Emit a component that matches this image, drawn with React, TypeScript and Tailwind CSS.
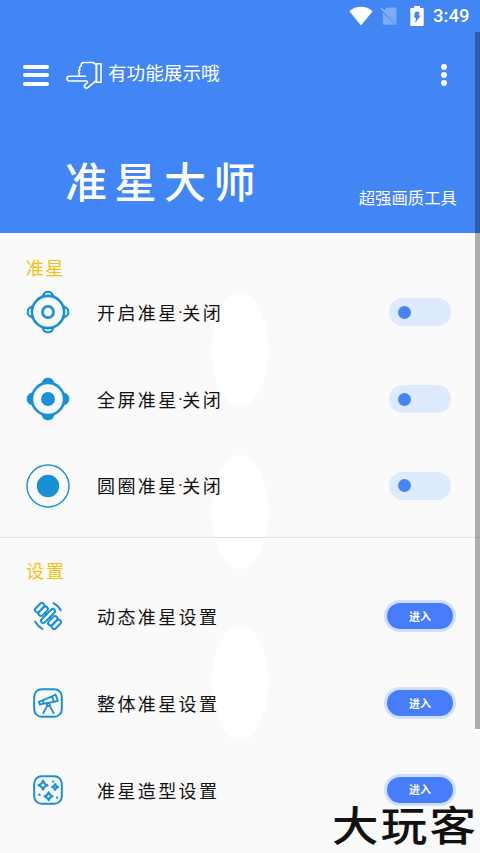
import type { FC, ReactNode } from "react";

import { clsx } from "clsx";
import { useState } from "react";

const KnobIcon: FC<{ filled?: boolean }> = ({ filled = false }) => (
  <svg viewBox="0 0 44 44" className="h-11 w-11 text-[#1790d8]" fill="none" stroke="currentColor" strokeWidth="2">
    {[0, 90, 180, 270].map((angle) => (
      <path
        key={angle}
        d="M16.5 6.2C17.6 3 19.4 1.700 22 1.700S26.400 3 27.500 6.200"
        transform={`rotate(${angle} 22 22)`}
        fill={filled ? "currentColor" : "none"}
      />
    ))}
    <circle cx="22" cy="22" r="16.100" fill="#fafafa" strokeWidth="2.600" />
    {filled ? (
      <circle cx="22" cy="22" r="7" fill="currentColor" stroke="none" />
    ) : (
      <circle cx="22" cy="22" r="5.600" strokeWidth="2.600" />
    )}
  </svg>
);

const CircleIcon: FC = () => (
  <svg viewBox="0 0 44 44" className="h-11 w-11 text-[#1790d8]" fill="none" stroke="currentColor">
    <circle cx="22" cy="22" r="21" strokeWidth="1.400" />
    <circle cx="22" cy="22" r="11.200" fill="currentColor" stroke="none" />
  </svg>
);

const MotionIcon: FC = () => (
  <svg viewBox="0 0 30 30" className="h-[30px] w-[30px] text-[#1790d8]" fill="none" stroke="currentColor" strokeWidth="2" strokeLinecap="round">
    <g transform="rotate(45 15 15)">
      <rect x=".8" y="9.400" width="4.900" height="11.200" rx="2.450" />
      <rect x="5.700" y="9.400" width="4.900" height="11.200" rx="2.450" />
      <rect x="12.800" y="6" width="4.400" height="18" rx="2.200" />
      <rect x="19.400" y="9.400" width="4.900" height="11.200" rx="2.450" />
      <rect x="24.300" y="9.400" width="4.900" height="11.200" rx="2.450" />
      <path d="M10.600 15h2.200M17.200 15h2.200" />
    </g>
    <path d="M20.500 2.200c3.200 1.600 5.700 4 7.200 7.200M2.300 20.600c1.500 3.200 4 5.600 7.200 7.200" />
  </svg>
);

const TelescopeIcon: FC = () => (
  <svg viewBox="0 0 30 30" className="h-[30px] w-[30px] text-[#1790d8]" fill="none" stroke="currentColor" strokeWidth="1.800" strokeLinecap="round" strokeLinejoin="round">
    <rect x="1.200" y="1.200" width="27.600" height="27.600" rx="7.500" strokeWidth="2" />
    <path d="M5.800 13.800l3.800-1.500 1.200 3.400-4.100.8zM9.600 12.300l9.400-3.900 1.900 5.400-10.100 1.900zM19 8.200l3.600-1.700 2.200 6.400-3.900.9zM14.300 17.600l-4 7.400M16.600 17.600l4 7.400" />
    <circle cx="15.400" cy="16.500" r="1.500" />
  </svg>
);

const SparkleIcon: FC = () => (
  <svg viewBox="0 0 30 30" className="h-[30px] w-[30px] text-[#1790d8]" fill="none" stroke="currentColor" strokeWidth="2" strokeLinejoin="round">
    <rect x="1.200" y="1.200" width="27.600" height="27.600" rx="7.500" />
    <path d="M10 5.600q.9 3.700 4.600 4.600q-3.700.9-4.600 4.600q-.9-3.700-4.600-4.600q3.700-.9 4.600-4.600zM22.200 9q.6 2.400 3 3q-2.400.6-3 3q-.6-2.400-3-3q2.400-.6 3-3zM15.600 17.200q.8 3.200 4 4q-3.200.8-4 4q-.8-3.200-4-4q3.200-.8 4-4z" />
    <g fill="currentColor" stroke="none">
      <circle cx="20.200" cy="6.600" r="1.200" />
      <circle cx="6.400" cy="19.800" r="1.200" />
      <circle cx="24" cy="22.600" r="1.200" />
    </g>
  </svg>
);

const PointingHandIcon: FC = () => (
  <svg viewBox="0 0 36 28" className="h-7 w-9" fill="none" stroke="white" strokeWidth="1.600" strokeLinejoin="round" strokeLinecap="round">
    <path d="M19.500 15.200H3.400c-3.200 0-3.200 4.800 0 4.800H20.400c1.200 0 1.400 1.200.6 2l-1.600 1.300c-2.400 2 .2 5 2.400 3.300l6.600-5.400 2-1.600V3.900l-3.200-2.400H18.300c-2.400 0-3.600 1-2.900 3.500-2 .4-2.500 2-1.400 3.500-1.600.9-1.600 2.600-.4 3.400-1 .9-.6 2.900.9 3.300" />
    <path d="M30.400 2.800h4.600v18.400h-4.600z" />
  </svg>
);

const StatusBar: FC = () => (
  <div className="flex h-8 items-center justify-end pr-[11px]">
    <svg viewBox="0 0 24 20" className="mr-[7px] h-5 w-6" fill="white">
      <path d="M.4 5.200C7-.6 17-.6 23.600 5.200L12 19.500z" />
    </svg>
    <svg viewBox="0 0 18 20" className="mr-3 h-5 w-[18px]">
      <path d="M7 1.500h8.500q1 0 1 1v14L4 4.200zM2.800 6.500l12.400 12.300H3.800q-1 0-1-1z" fill="#7faaf8" />
      <path d="M1 2l16 16.600" stroke="#8fb5fa" strokeWidth="1.300" />
    </svg>
    <svg viewBox="0 0 14 20" className="mr-[9px] h-5 w-3.5">
      <path d="M4 0h6v2h3q.7 0 .7.7v16.600q0 .7-.7.7H1q-.7 0-.7-.7V2.700Q.3 2 1 2h3z" fill="white" />
      <path d="M5.200 5.800h4.400L8.600 9.400h2.200L5.200 17l.8-5.200H3.800z" fill="#4285f4" />
    </svg>
    <span className="w-9 whitespace-nowrap font-[Roboto,sans-serif] text-[18.500px] leading-8 font-medium text-white">
      3:49
    </span>
  </div>
);

const Header: FC = () => (
  <header className="h-[233px] bg-[#4285f4] text-white">
    <StatusBar />
    <div className="flex h-[86px] items-center pr-[33px] pl-[23px]">
      <button className="flex flex-col gap-[4.500px]">
        <span className="h-1 w-[26px] rounded-full bg-white" />
        <span className="h-1 w-[26px] rounded-full bg-white" />
        <span className="h-1 w-[26px] rounded-full bg-white" />
      </button>
      <div className="ml-[17px]">
        <PointingHandIcon />
      </div>
      <span className="ml-1.5 -mt-1.5 text-[18.600px]">有功能展示哦</span>
      <button className="ml-auto flex flex-col gap-[2.300px]">
        <span className="h-1.5 w-1.5 rounded-full bg-white" />
        <span className="h-1.5 w-1.5 rounded-full bg-white" />
        <span className="h-1.5 w-1.5 rounded-full bg-white" />
      </button>
    </div>
    <div className="flex items-end justify-between pr-[23px] pl-[65px]">
      <h1 className="mt-[29px] text-[42px] leading-[66px] font-medium tracking-[7.500px]">准星大师</h1>
      <p className="mb-1 text-[16.400px] leading-6">超强画质工具</p>
    </div>
  </header>
);

const Switch: FC = () => {
  const [on, setOn] = useState(false);

  return (
    <button
      role="switch"
      aria-checked={on}
      onClick={() => setOn(!on)}
      className={clsx("mr-[3px] flex h-7 w-[62px] items-center rounded-full bg-[#deeafd] px-[9px]", on && "justify-end")}
    >
      <span className="h-[13px] w-[13px] rounded-full bg-[#4583f8]" />
    </button>
  );
};

const EnterButton: FC = () => (
  <button className="mr-[-2px] flex h-8 w-[72px] items-center justify-center rounded-full border-[3px] border-[#d0e0fc] bg-[#477cfa] text-[11px] font-bold text-white">
    进入
  </button>
);

const Row: FC<{ icon: ReactNode; children: ReactNode; action: ReactNode }> = ({ icon, children, action }) => (
  <li className="flex h-[86.700px] items-center pr-[26px] pl-[26px]">
    <div className="flex w-11 justify-center">{icon}</div>
    <span className="ml-[27px] flex flex-1 text-[18px] leading-7 tracking-[2.400px] text-[#111]">{children}</span>
    {action}
  </li>
);

const SWITCH_ROWS = [
  { label: "开启准星", icon: <KnobIcon /> },
  { label: "全屏准星", icon: <KnobIcon filled /> },
  { label: "圆圈准星", icon: <CircleIcon /> },
];

const SETTING_ROWS = [
  { label: "动态准星设置", icon: <MotionIcon /> },
  { label: "整体准星设置", icon: <TelescopeIcon /> },
  { label: "准星造型设置", icon: <SparkleIcon /> },
];

export default function App() {
  return (
    <div className="relative h-[853px] w-[480px] overflow-hidden bg-[#fafafa] font-['Noto_Sans_CJK_SC',sans-serif]">
      <Header />

      <div className="absolute top-[292px] left-[212px] h-[114px] w-14 rounded-[50%] bg-white" />
      <div className="absolute top-[455px] left-[212px] h-[114px] w-14 rounded-[50%] bg-white" />
      <div className="absolute top-[626px] left-[212px] h-[114px] w-14 rounded-[50%] bg-white" />

      <main className="relative">
        <section className="h-[305px] border-b border-[#e2e2e2] pt-5">
          <h2 className="-mb-3 pl-[26px] text-[18px] leading-7 tracking-[1.500px] text-[#f4c20d]">准星</h2>
          <ul>
            {SWITCH_ROWS.map((row) => (
              <Row key={row.label} icon={row.icon} action={<Switch />}>
                {row.label}
                <span className="mt-px font-[Roboto,sans-serif] text-[12px] font-bold tracking-normal">·</span>
                关闭
              </Row>
            ))}
          </ul>
        </section>

        <section className="pt-[18px]">
          <h2 className="-mb-[11px] pl-[26px] text-[18px] leading-7 tracking-[2px] text-[#f4c20d]">设置</h2>
          <ul>
            {SETTING_ROWS.map((row) => (
              <Row key={row.label} icon={row.icon} action={<EnterButton />}>
                {row.label}
              </Row>
            ))}
          </ul>
        </section>
      </main>

      <div className="absolute top-8 right-0 h-[697px] w-[5px] bg-black/30" />
      <div className="absolute top-[800px] left-[332px] origin-center scale-y-[.88] text-[46.500px] leading-[46px] font-medium tracking-[2.200px] whitespace-nowrap text-[#111]">
        大玩客
      </div>
    </div>
  );
}
